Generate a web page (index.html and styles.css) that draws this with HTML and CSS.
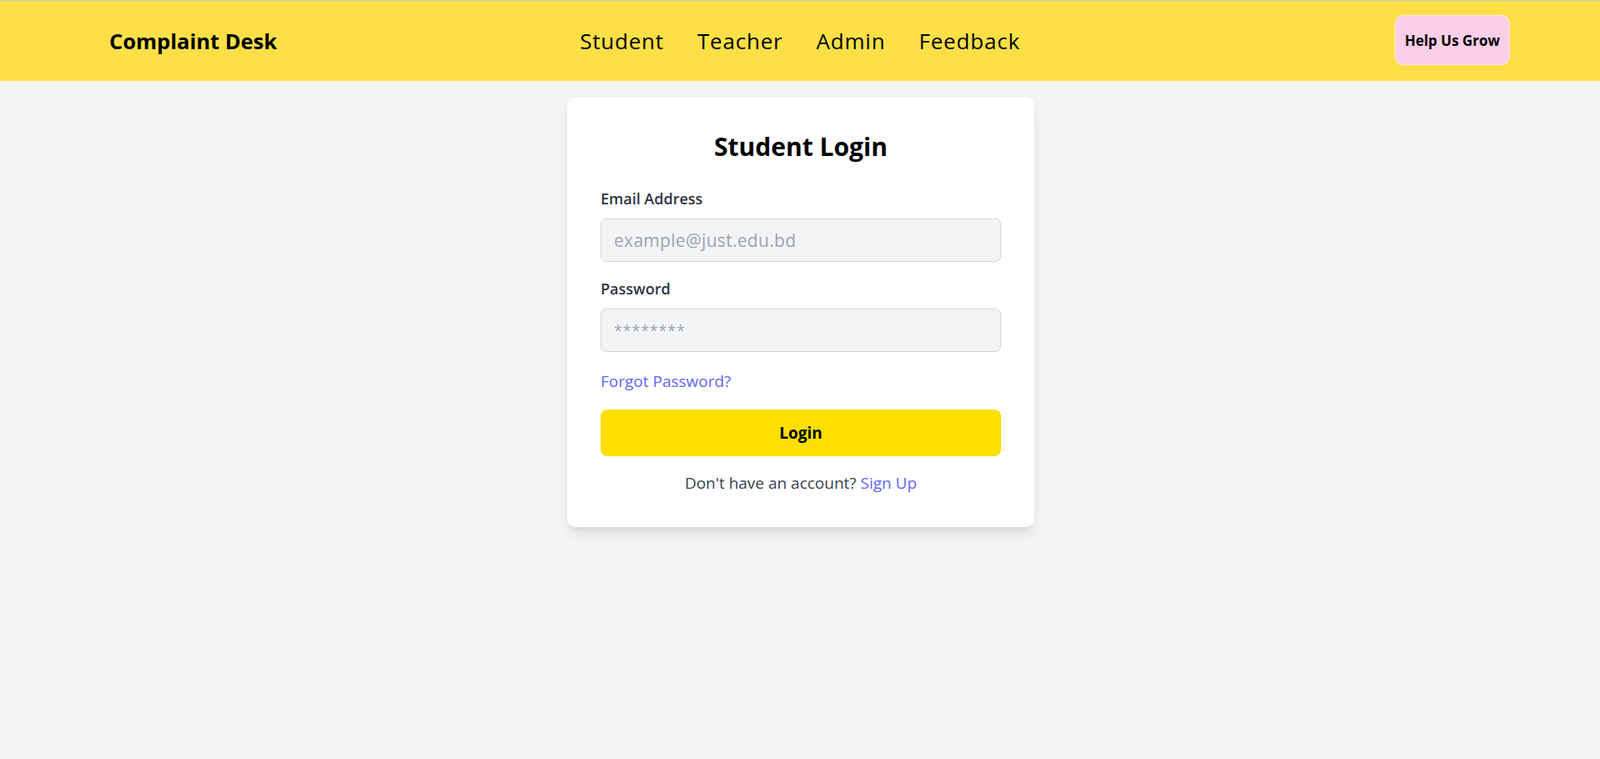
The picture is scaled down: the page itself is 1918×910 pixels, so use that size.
FILE: index.html
```html
<!DOCTYPE html>
<html lang="en">
<head>
<meta charset="utf-8">
<title>Complaint Desk - Student Login</title>
<link rel="stylesheet" href="styles.css">
</head>
<body>
<header class="topbar">
  <a class="brand" href="#">Complaint Desk</a>
  <nav class="nav">
    <a href="#">Student</a>
    <a href="#">Teacher</a>
    <a href="#">Admin</a>
    <a href="#">Feedback</a>
  </nav>
  <a class="grow-btn" href="#">Help Us Grow</a>
</header>
<main class="main">
  <section class="card">
    <h1 class="title">Student Login</h1>
    <div class="field">
      <label class="label" for="email">Email Address</label>
      <input class="input" id="email" type="email" placeholder="example@just.edu.bd">
    </div>
    <div class="field">
      <label class="label" for="pw">Password</label>
      <input class="input input-pw" id="pw" type="password" placeholder="********">
    </div>
    <div class="forgot"><a href="#">Forgot Password?</a></div>
    <button class="login-btn" type="button">Login</button>
    <p class="signup">Don't have an account? <a href="#">Sign Up</a></p>
  </section>
</main>
</body>
</html>
```

FILE: styles.css
```css
* { box-sizing: border-box; }
html, body { margin: 0; padding: 0; }
body {
  background: #f3f4f6;
  font-family: "Open Sans", "Noto Sans", sans-serif;
  color: #111;
  min-height: 910px;
}
a { text-decoration: none; color: inherit; }

.topbar {
  display: grid;
  grid-template-columns: 1fr auto 1fr;
  align-items: center;
  height: 97px;
  padding: 0 108px;
  background: #fee046;
  border-top: 1px solid #c9ccd4;
}
.brand {
  margin-left: 23px;
  font-size: 25.5px;
  font-weight: 700;
  color: #000;
}
.nav {
  display: flex;
  gap: 40px;
}
.nav a {
  font-size: 26px;
  letter-spacing: 0.8px;
  color: #000;
}
.grow-btn {
  justify-self: end;
  display: flex;
  align-items: center;
  justify-content: center;
  width: 138px;
  height: 60px;
  margin-top: -2px;
  background: #fbcfe8;
  border: 1px solid #fde9f2;
  border-radius: 10px;
  font-size: 17px;
  font-weight: 700;
  color: #000;
}

.main {
  display: flex;
  justify-content: center;
  padding: 20px 0 0 2px;
}
.card {
  width: 560px;
  background: #fff;
  border-radius: 10px;
  padding: 41px 40px 41px;
  box-shadow: 0 10px 15px -3px rgba(0,0,0,0.1), 0 4px 6px -4px rgba(0,0,0,0.1);
}
.title {
  margin: 0 0 32px;
  text-align: center;
  font-size: 30px;
  line-height: 36px;
  font-weight: 700;
  color: #000;
}
.field { margin-bottom: 20px; }
.label {
  display: block;
  margin-bottom: 12px;
  font-size: 18px;
  line-height: 24px;
  font-weight: 600;
  color: #2f3441;
}
.input {
  display: block;
  width: 100%;
  height: 52px;
  padding: 0 15px;
  background: #f3f4f6;
  border: 1px solid #d1d5db;
  border-radius: 7px;
  font-family: inherit;
  font-size: 21px;
  letter-spacing: 0.3px;
  color: #111;
  outline: none;
}
.input::placeholder { color: #9ca3af; }
.input-pw { font-size: 18px; letter-spacing: 0.8px; }
.forgot {
  margin-top: 23px;
  font-size: 19px;
  line-height: 24px;
}
.forgot a { color: #6366f1; }
.login-btn {
  display: block;
  width: 100%;
  height: 56px;
  margin-top: 22px;
  background: #fddf00;
  border: none;
  border-radius: 8px;
  font-family: inherit;
  font-size: 19px;
  font-weight: 700;
  color: #000;
}
.signup {
  margin: 20px 0 0;
  text-align: center;
  font-size: 19px;
  line-height: 24px;
  color: #374151;
}
.signup a { color: #6366f1; }
```
